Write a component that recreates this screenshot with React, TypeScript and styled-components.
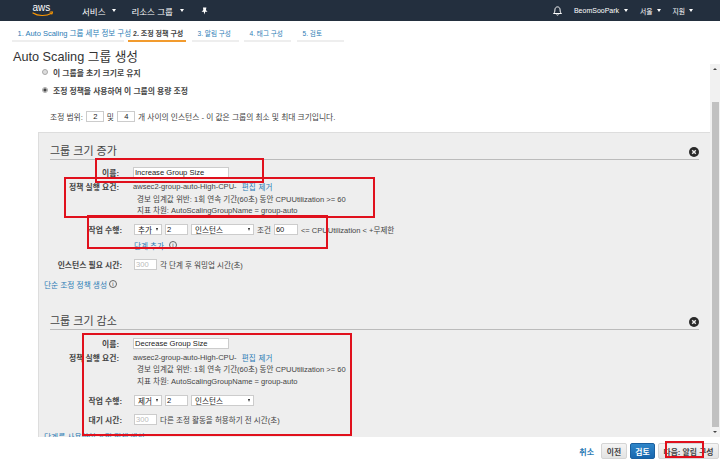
import React from "react"
import styled, { createGlobalStyle } from "styled-components"

const GlobalStyle = createGlobalStyle`
  html, body {
    margin: 0;
    padding: 0;
    background: #fff;
  }
  * {
    box-sizing: border-box;
  }
`

const Page = styled.div`
  position: relative;
  width: 720px;
  height: 467px;
  overflow: hidden;
  display: flex;
  flex-direction: column;
  font-family: "Liberation Sans", "Noto Sans CJK KR", sans-serif;
  font-size: 8.5px;
  color: #444;
`

const Nav = styled.div`
  height: 21px;
  flex: none;
  background: #232f3e;
  display: flex;
  align-items: center;
  padding-left: 32px;
  color: #fff;
`

const NavItem = styled.div<{ $left?: number; $gap?: number; $size?: number }>`
  margin-left: ${(p) => p.$left ?? 0}px;
  display: flex;
  align-items: center;
  gap: ${(p) => p.$gap ?? 7}px;
  font-size: ${(p) => p.$size ?? 8.5}px;
  white-space: nowrap;
`

const Caret = styled.span`
  width: 0;
  height: 0;
  border-left: 2.5px solid transparent;
  border-right: 2.5px solid transparent;
  border-top: 3px solid #fff;
`

const Tabs = styled.div`
  height: 20px;
  flex: none;
  padding: 5px 0 0 12px;
  display: flex;
`

const Tab = styled.div<{ $w: number; $gap: number; $size: number; $active?: boolean }>`
  width: ${(p) => p.$w}px;
  margin-right: ${(p) => p.$gap}px;
  height: 15px;
  padding-left: ${(p) => (p.$active ? 5 : 5.5)}px;
  line-height: 15px;
  font-size: ${(p) => p.$size}px;
  white-space: nowrap;
  color: ${(p) => (p.$active ? "#444" : "#2b7cb5")};
  font-weight: ${(p) => (p.$active ? 700 : 400)};
  border-bottom: 1px solid ${(p) => (p.$active ? "#f29b2e" : "#eee")};
  box-shadow: ${(p) => (p.$active ? "0 1px 0 #f29b2e" : "0 1px 0 #eee")};
`

const Title = styled.div`
  height: 23px;
  flex: none;
  padding: 8px 0 0 13px;
  font-size: 12.7px;
  line-height: 16px;
  color: #333;
  white-space: nowrap;
`

const Body = styled.div`
  height: 373px;
  flex: none;
  display: flex;
`

const Scroll = styled.div`
  width: 710px;
  overflow: hidden;
`

const Scrollbar = styled.div`
  width: 10px;
  background: #f1f1f1;
  display: flex;
  flex-direction: column;
  align-items: center;
`

const ScrollArrow = styled.span<{ $down?: boolean }>`
  flex: none;
  margin: 4px 0;
  width: 0;
  height: 0;
  border-left: 2px solid transparent;
  border-right: 2px solid transparent;
  ${(p) => (p.$down ? "border-top: 2px solid #444;" : "border-bottom: 2px solid #444;")}
`

const ScrollThumb = styled.div`
  margin-top: 28px;
  flex: 1;
  width: 7px;
  background: #c1c1c1;
`

const Intro = styled.div`
  height: 68px;
  padding: 2px 0 0 42px;
`

const RadioRow = styled.div<{ $mt: number }>`
  margin-top: ${(p) => p.$mt}px;
  height: 12px;
  display: flex;
  align-items: center;
  gap: 5px;
  color: #444;
  font-weight: 700;
  font-size: 7.8px;
  white-space: nowrap;
`

const Radio = styled.span<{ $on?: boolean }>`
  width: 6px;
  height: 6px;
  border-radius: 50%;
  background: ${(p) => (p.$on ? "radial-gradient(circle, #444 0 1.4px, #e8e8e8 1.8px)" : "#ddd")};
  border: 1px solid #aaa;
`

const RangeRow = styled.div`
  margin: 14px 0 0 8px;
  display: flex;
  align-items: center;
  gap: 3px;
  height: 12px;
  font-size: 7.75px;
  white-space: nowrap;
`

const Field = styled.span<{ $w: number; $muted?: boolean; $center?: boolean }>`
  display: inline-block;
  width: ${(p) => p.$w}px;
  height: 11px;
  line-height: 10px;
  background: #fff;
  border: 1px solid #ccc;
  padding-left: 1px;
  font-size: 7.6px;
  flex: none;
  text-align: ${(p) => (p.$center ? "center" : "left")};
  color: ${(p) => (p.$muted ? "#bbb" : "#222")};
  white-space: nowrap;
`

const Select = styled.span<{ $w: number }>`
  flex: none;
  width: ${(p) => p.$w}px;
  height: 11px;
  padding: 0 3px;
  background: #fff;
  border: 1px solid #ccc;
  display: flex;
  align-items: center;
  justify-content: space-between;
  font-size: 7.6px;
  color: #222;
  white-space: nowrap;
`

const SelectCaret = styled.span`
  width: 0;
  height: 0;
  border-left: 1.8px solid transparent;
  border-right: 1.8px solid transparent;
  border-top: 3px solid #222;
`

const Panel = styled.div`
  margin-left: 38px;
  height: 305px;
  background: #eee;
  border-top: 1px solid #ddd;
  border-left: 1px solid #ddd;
  padding: 0 11px;
  overflow: hidden;
  display: flow-root;
`

const SectionHead = styled.div<{ $mt: number }>`
  margin-top: ${(p) => p.$mt}px;
  height: 19px;
  border-bottom: 1px solid #bbb;
  padding-top: 4px;
  font-size: 11px;
  line-height: 13px;
  color: #444;
  position: relative;
`

const CloseIcon = styled.svg`
  position: absolute;
  right: 0;
  top: 6px;
  width: 10px;
  height: 10px;
`

const Row = styled.div<{ $h: number; $mt?: number }>`
  height: ${(p) => p.$h}px;
  margin-top: ${(p) => p.$mt ?? 0}px;
  display: flex;
  align-items: center;
`

const Label = styled.div<{ $wide?: boolean }>`
  width: ${(p) => (p.$wide ? 72 : 69)}px;
  flex: none;
  text-align: right;
  font-weight: 700;
  font-size: 7.8px;
  color: #444;
  white-space: nowrap;
`

const Value = styled.div<{ $left?: number }>`
  margin-left: ${(p) => p.$left ?? 14}px;
  display: flex;
  align-items: center;
  gap: 3px;
  white-space: nowrap;
  font-size: 7.55px;
`

const Link = styled.span`
  color: #2b7cb5;
  white-space: nowrap;
`

const OutdentLink = styled.div`
  margin-left: -6px;
  display: flex;
  align-items: center;
  font-size: 7.7px;
`

const Info = styled.span`
  display: inline-flex;
  align-items: center;
  justify-content: center;
  width: 8px;
  height: 8px;
  margin-left: 2px;
  border: 1px solid #666;
  border-radius: 50%;
  font-size: 6px;
  color: #444;
`

const ClippedLink = styled.div`
  margin: 7px 0 0 -6px;
  color: #2b7cb5;
  font-size: 7.7px;
  line-height: 12px;
  white-space: nowrap;
`

const Footer = styled.div`
  flex: 1;
  display: flex;
  align-items: center;
  justify-content: flex-end;
  padding: 0 1px 2px 0;
  gap: 3px;
  background: #fff;
`

const CancelLink = styled.span`
  color: #2b7cb5;
  font-weight: 700;
  font-size: 8px;
  margin-right: 4px;
`

const Button = styled.div<{ $w: number; $primary?: boolean }>`
  width: ${(p) => p.$w}px;
  height: 16px;
  border-radius: 2px;
  font-size: 7.8px;
  font-weight: 700;
  display: flex;
  align-items: center;
  justify-content: center;
  white-space: nowrap;
  color: ${(p) => (p.$primary ? "#fff" : "#444")};
  background: ${(p) => (p.$primary ? "linear-gradient(#2f86c9, #1766ae)" : "linear-gradient(#f4f4f4, #e3e3e3)")};
  border: 1px solid ${(p) => (p.$primary ? "#1a5f9e" : "#d5d5d5")};
`

// red annotations drawn over the screenshot
const Mark = styled.div<{ $x: number; $y: number; $w: number; $h: number }>`
  position: absolute;
  left: ${(p) => p.$x}px;
  top: ${(p) => p.$y}px;
  width: ${(p) => p.$w}px;
  height: ${(p) => p.$h}px;
  border: 2px solid #e0101c;
`

const AwsLogo = () => (
  <svg width="22" height="17" viewBox="0 0 22 17">
    <text x="0.5" y="9" fontSize="10" fontFamily="Liberation Sans, sans-serif" fill="#fff">
      aws
    </text>
    <path d="M1 11c5 3.2 13 3.4 18.6.2" fill="none" stroke="#f90" strokeWidth="1.2" strokeLinecap="round" />
    <path d="M17.6 10.2l3-.4-.8 2.7" fill="none" stroke="#f90" strokeWidth="1" />
  </svg>
)

const Bell = () => (
  <svg width="11" height="11" viewBox="0 0 11 11" fill="none" stroke="#fff" strokeWidth="1">
    <path d="M1.5 8.5c1.2-1 1.4-2 1.4-3.6 0-1.8 1-3 2.6-3s2.6 1.2 2.6 3c0 1.6.2 2.6 1.4 3.6z" />
    <path d="M4.4 9.5c.3.8 1.9.8 2.2 0" />
  </svg>
)

const Pin = () => (
  <svg width="7" height="8" viewBox="0 0 7 8" fill="#fff">
    <path d="M2 .5h3.4l-.5 2.6 1.6 1.7H4.2L3.4 7.6l-.7-2.8H.6l1.7-1.7z" />
  </svg>
)

const Close = () => (
  <CloseIcon viewBox="0 0 10 10">
    <circle cx="5" cy="5" r="5" fill="#2a2a2a" />
    <path d="M3.2 3.2l3.6 3.6M6.8 3.2L3.2 6.8" stroke="#eee" strokeWidth="1.4" />
  </CloseIcon>
)

const tabs = [
  { label: "1. Auto Scaling 그룹 세부 정보 구성", w: 112, gap: 4, size: 7.5 },
  { label: "2. 조정 정책 구성", w: 58, gap: 6, size: 7, active: true },
  { label: "3. 알림 구성", w: 47, gap: 5, size: 6.6 },
  { label: "4. 태그 구성", w: 47, gap: 6, size: 6.6 },
  { label: "5. 검토", w: 47, gap: 0, size: 6.6 }
]

const ConditionRows = ({ top }: { top: number }) => (
  <>
    <Row $h={11.5} $mt={top}>
      <Label>정책 실행 요건:</Label>
      <Value>
        awsec2-group-auto-High-CPU-
        <Link>&nbsp;편집</Link>
        <Link>제거</Link>
      </Value>
    </Row>
    <Row $h={11.5}>
      <Label />
      <Value $left={18}>경보 임계값 위반: 1회 연속 기간(60초) 동안 CPUUtilization &gt;= 60</Value>
    </Row>
    <Row $h={11.5}>
      <Label />
      <Value $left={18}>지표 차원: AutoScalingGroupName = group-auto</Value>
    </Row>
  </>
)

const App = () => {
  return (
    <Page>
      <GlobalStyle />
      <Nav>
        <AwsLogo />
        <NavItem $left={28}>
          서비스 <Caret />
        </NavItem>
        <NavItem $left={15}>
          리소스 그룹 <Caret />
        </NavItem>
        <NavItem $left={17}>
          <Pin />
        </NavItem>
        <NavItem $left={344}>
          <Bell />
        </NavItem>
        <NavItem $left={11} $gap={5} $size={7}>
          BeomSooPark <Caret />
        </NavItem>
        <NavItem $left={12} $gap={4} $size={6.8}>
          서울 <Caret />
        </NavItem>
        <NavItem $left={12} $gap={4} $size={6.8}>
          지원 <Caret />
        </NavItem>
      </Nav>
      <Tabs>
        {tabs.map((t) => (
          <Tab key={t.label} $w={t.w} $gap={t.gap} $size={t.size} $active={t.active}>
            {t.label}
          </Tab>
        ))}
      </Tabs>
      <Title>Auto Scaling 그룹 생성</Title>
      <Body>
        <Scroll>
          <Intro>
            <RadioRow $mt={0}>
              <Radio />이 그룹을 초기 크기로 유지
            </RadioRow>
            <RadioRow $mt={6}>
              <Radio $on />
              조정 정책을 사용하여 이 그룹의 용량 조정
            </RadioRow>
            <RangeRow>
              조정 범위:
              <Field $w={18} $center>
                2
              </Field>
              및
              <Field $w={18} $center>
                4
              </Field>
              개 사이의 인스턴스 - 이 값은 그룹의 최소 및 최대 크기입니다.
            </RangeRow>
          </Intro>
          <Panel>
            <SectionHead $mt={8}>
              그룹 크기 증가
              <Close />
            </SectionHead>
            <Row $h={12} $mt={6}>
              <Label>이름:</Label>
              <Value>
                <Field $w={96}>Increase Group Size</Field>
              </Value>
            </Row>
            <ConditionRows top={3} />
            <Row $h={12} $mt={7.5}>
              <Label $wide>작업 수행:</Label>
              <Value $left={12}>
                <Select $w={28}>
                  추가 <SelectCaret />
                </Select>
                <Field $w={23}>2</Field>
                <Select $w={63}>
                  인스턴스 <SelectCaret />
                </Select>
                조건
                <Field $w={24}>60</Field>
                &lt;= CPUUtilization &lt; +무제한
              </Value>
            </Row>
            <Row $h={12} $mt={4}>
              <Label $wide />
              <Value $left={12}>
                <Link>단계 추가</Link>
                <Info>i</Info>
              </Value>
            </Row>
            <Row $h={12} $mt={7}>
              <Label $wide>인스턴스 필요 시간:</Label>
              <Value $left={12}>
                <Field $w={23} $muted>
                  300
                </Field>
                각 단계 후 워밍업 시간(초)
              </Value>
            </Row>
            <Row $h={12} $mt={8}>
              <OutdentLink>
                <Link>단순 조정 정책 생성</Link>
                <Info>i</Info>
              </OutdentLink>
            </Row>
            <SectionHead $mt={21}>
              그룹 크기 감소
              <Close />
            </SectionHead>
            <Row $h={12} $mt={7}>
              <Label>이름:</Label>
              <Value>
                <Field $w={96}>Decrease Group Size</Field>
              </Value>
            </Row>
            <ConditionRows top={2.5} />
            <Row $h={12} $mt={8}>
              <Label $wide>작업 수행:</Label>
              <Value $left={12}>
                <Select $w={28}>
                  제거 <SelectCaret />
                </Select>
                <Field $w={23}>2</Field>
                <Select $w={63}>
                  인스턴스 <SelectCaret />
                </Select>
              </Value>
            </Row>
            <Row $h={12} $mt={7}>
              <Label $wide>대기 시간:</Label>
              <Value $left={12}>
                <Field $w={23} $muted>
                  300
                </Field>
                다른 조정 활동을 허용하기 전 시간(초)
              </Value>
            </Row>
            <ClippedLink>단계를 사용하여 조정 정책 생성</ClippedLink>
          </Panel>
        </Scroll>
        <Scrollbar>
          <ScrollArrow />
          <ScrollThumb />
          <ScrollArrow $down />
        </Scrollbar>
      </Body>
      <Footer>
        <CancelLink>취소</CancelLink>
        <Button $w={26}>이전</Button>
        <Button $w={25} $primary>
          검토
        </Button>
        <Button $w={61}>다음: 알림 구성</Button>
      </Footer>
      <Mark $x={95} $y={158} $w={169} $h={25} />
      <Mark $x={64} $y={177} $w={311} $h={41} />
      <Mark $x={87} $y={215} $w={241} $h={34} />
      <Mark $x={82} $y={333} $w={270} $h={103} />
      <Mark $x={665} $y={441} $w={39} $h={17} />
    </Page>
  )
}

export default App
